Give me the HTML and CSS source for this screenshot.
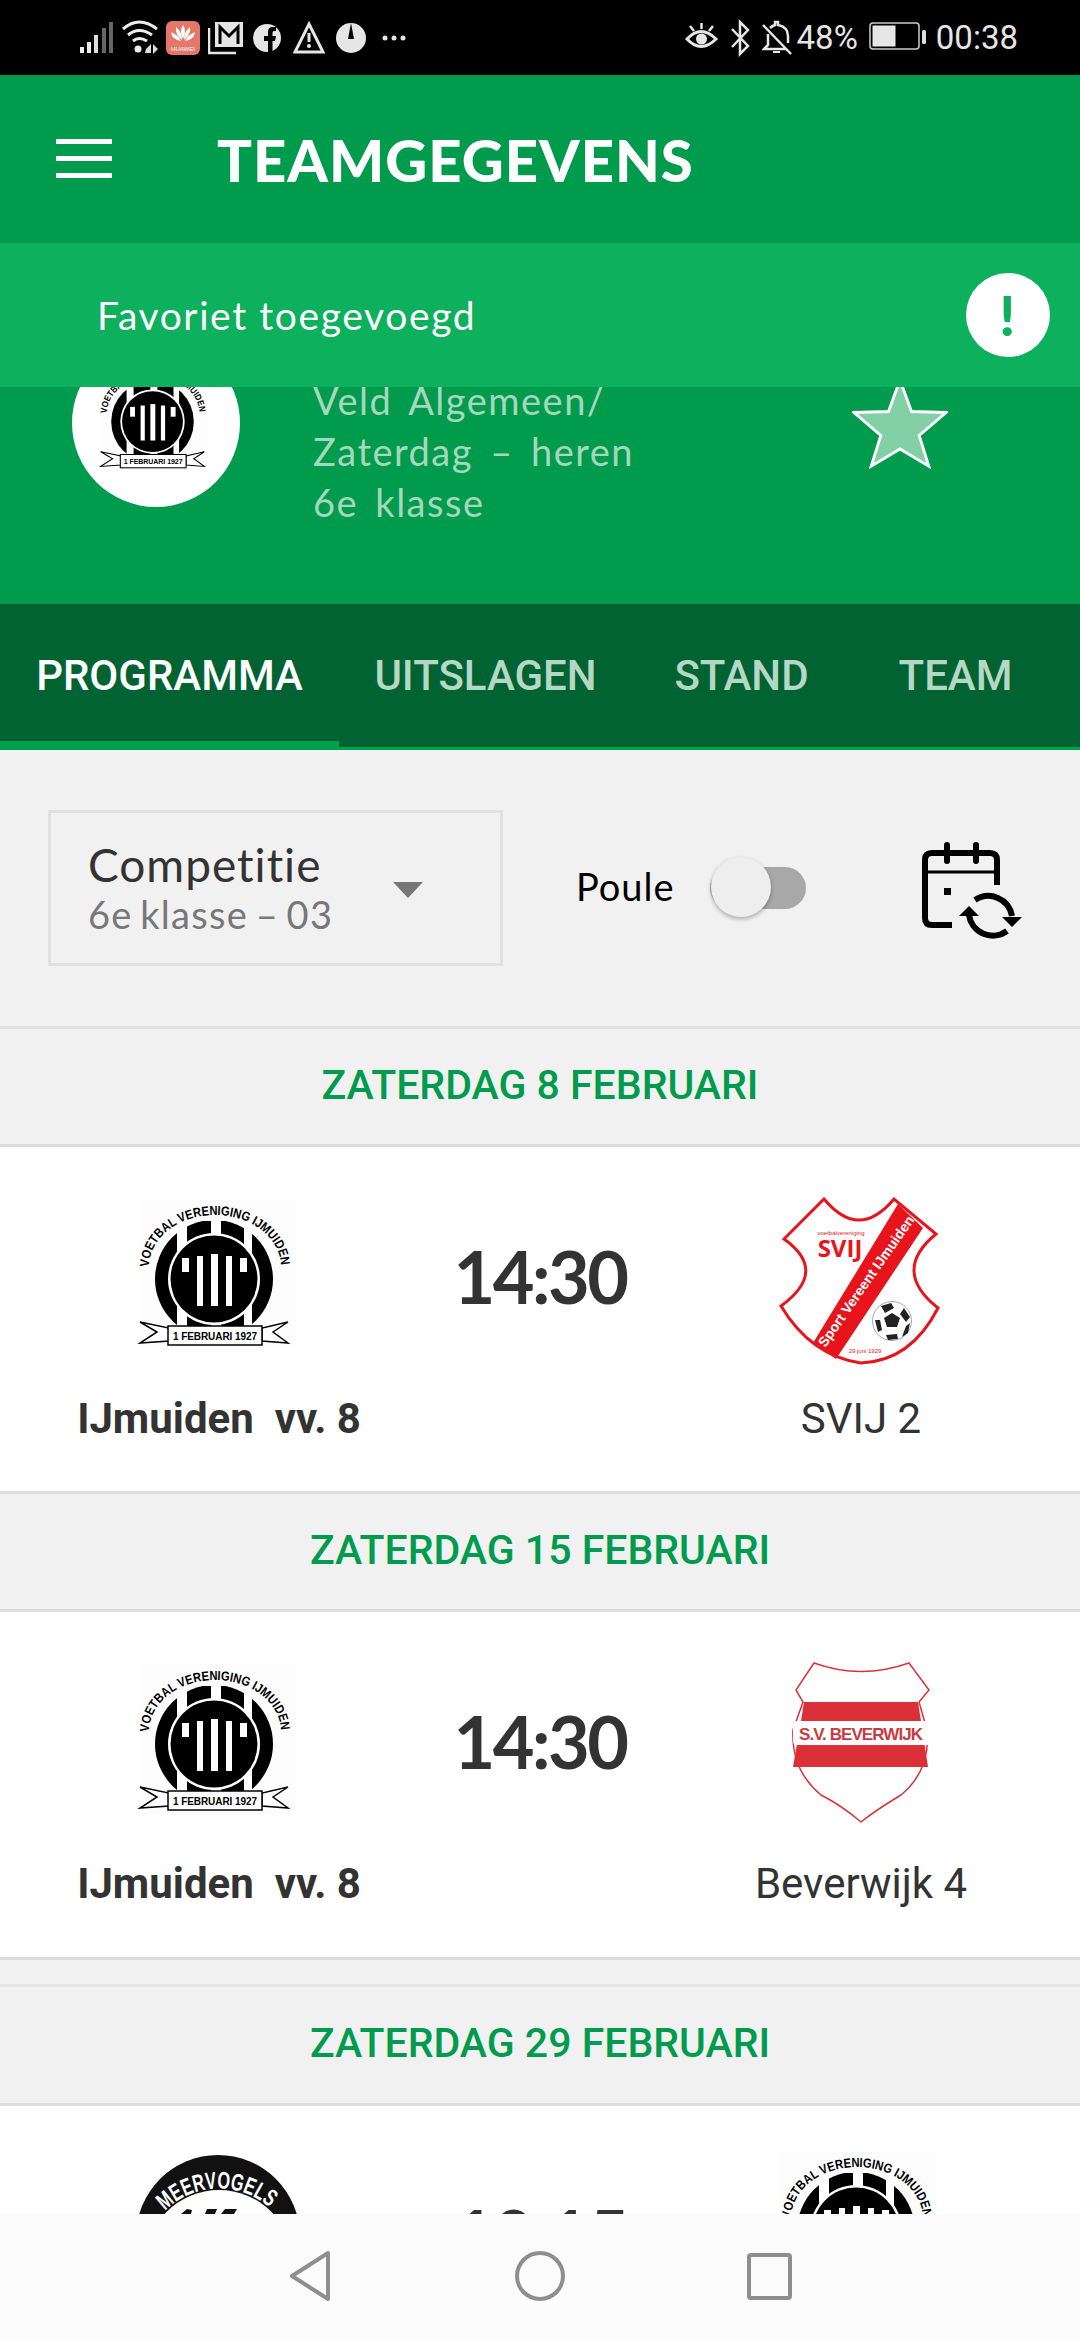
FILE: index.html
```html
<!DOCTYPE html>
<html lang="nl">
<head>
    <meta charset="UTF-8">
    <meta name="viewport" content="width=device-width, initial-scale=1.0">
    <title>Teamgegevens</title>
    <link rel="stylesheet" href="styles.css">
</head>
<body>
<svg class="defs" width="0" height="0">
    <defs>
        <symbol id="crest-ijmuiden" viewBox="0 0 240 200">
            <rect x="40" y="28" width="157" height="150" fill="#fdfdfd"/>
            <circle cx="115" cy="108" r="59" fill="#000"/>
            <rect x="78" y="45" width="10" height="112" fill="#fff"/>
            <rect x="112" y="45" width="10" height="112" fill="#fff"/>
            <rect x="145" y="45" width="8" height="112" fill="#fff"/>
            <rect x="50" y="40" width="130" height="10" fill="#fdfdfd"/>
            <circle cx="115" cy="108" r="46" fill="#fff"/>
            <circle cx="115" cy="108" r="43.5" fill="#000"/>
            <rect x="83" y="87" width="7" height="14" fill="#fff"/>
            <rect x="98" y="85" width="6" height="50" fill="#fff"/>
            <rect x="112" y="83" width="7" height="52" fill="#fff"/>
            <rect x="127" y="85" width="6" height="50" fill="#fff"/>
            <rect x="141" y="87" width="7" height="14" fill="#fff"/>
            <path id="arc-ij" d="M50 96 A66 52 0 0 1 182 96" fill="none"/>
            <text class="crest-arc"><textPath href="#arc-ij" textLength="184" lengthAdjust="spacingAndGlyphs">VOETBAL VERENIGING IJMUIDEN</textPath></text>
            <path d="M41 151 L70 157 V170 L41 172 L58 161 Z M189 151 L163 157 V170 L189 172 L174 161 Z" fill="#fff" stroke="#000" stroke-width="1.5"/>
            <rect x="69" y="155" width="94" height="19" fill="#fff" stroke="#000" stroke-width="1.5"/>
            <text class="crest-ribbon" x="116" y="169" text-anchor="middle" textLength="84">1 FEBRUARI 1927</text>
        </symbol>
        <symbol id="crest-svij" viewBox="0 0 220 200">
            <path d="M73 28 Q108 70 143 28 L185 63 Q140 100 187 137 Q160 190 110 192 Q60 185 30 135 Q78 100 33 68 Z" fill="#fff" stroke="#e8141c" stroke-width="3"/>
            <polygon points="147,33 172,57 85,188 62,172" fill="#e8141c"/>
            <text class="svij-band" transform="translate(119 113) rotate(-55)" text-anchor="middle">Sport Vereent IJmuiden</text>
            <text class="svij-small" x="90" y="64" text-anchor="middle">voetbalvereniging</text>
            <text class="svij-name" x="89" y="86" text-anchor="middle">SVIJ</text>
            <text class="svij-small" x="114" y="182" text-anchor="middle">29 juni 1929</text>
            <circle cx="141" cy="150" r="19.5" fill="#fff" stroke="#aaa" stroke-width="1"/>
            <polygon points="141,143 149,148 146,157 136,157 133,148" fill="#222" transform="translate(0 -1)"/>
            <path d="M130 135 L140 132 L143 137 L134 142 Z M153 137 L159 146 L155 151 L149 143 Z M124 149 L129 149 L131 159 L127 161 Z M135 164 L146 163 L147 168 L137 169 Z M155 155 L159 152 L157 162 L151 166 Z" fill="#222"/>
        </symbol>
        <symbol id="crest-beverwijk" viewBox="0 0 220 200">
            <path d="M63 27 Q110 44 158 27 L178 54 L168 66 L176 94 Q180 134 150 159 Q125 174 110 186 Q90 169 70 159 Q40 134 42 94 L52 66 L45 54 Z" fill="#fff" stroke="#d8333a" stroke-width="1.5"/>
            <polygon points="53,66 167,66 170,85 177,131 42,131 50,85" fill="#dc3038"/>
            <rect x="42" y="85" width="137" height="24" rx="4" fill="#fff"/>
            <text class="bev-name" x="110" y="104" text-anchor="middle" textLength="124">S.V. BEVERWIJK</text>
        </symbol>
        <symbol id="crest-meervogels" viewBox="0 0 240 200">
            <circle cx="119" cy="107" r="82" fill="#111"/>
            <circle cx="120" cy="134" r="74" fill="#fff"/>
            <path id="arc-mv" d="M66 81 A76 76 0 0 1 174 81" fill="none"/>
            <text class="mv-arc"><textPath href="#arc-mv" textLength="115" lengthAdjust="spacingAndGlyphs">MEERVOGELS</textPath></text>
            <path d="M82 84 l6 -5 l5 1 l-1 4 z M106 84 l2 -5 l10 0 l-2 5 z M122 84 l4 -5 l12 0 l-3 5 z" fill="#111"/>
        </symbol>
    </defs>
</svg>

<div class="phone">
    <div class="status-bar">
        <div class="status-left">
            <svg class="ic-signal" width="42" height="40" viewBox="0 0 42 40">
                <rect x="0" y="29" width="4" height="6" fill="#eee"/>
                <rect x="7" y="24" width="4" height="11" fill="#eee"/>
                <rect x="14" y="17" width="4" height="18" fill="#ddd"/>
                <rect x="22" y="10" width="4" height="25" fill="#666"/>
                <rect x="29" y="4" width="4" height="31" fill="#666"/>
            </svg>
            <svg width="44" height="40" viewBox="0 0 44 40" fill="none" stroke="#eee" stroke-width="3">
                <path d="M1 11 Q17 -3 35 11"/>
                <path d="M6 17 Q17 8 30 17"/>
                <path d="M11 23 Q17 18 25 23"/>
                <circle cx="16" cy="31" r="3.5" fill="#eee" stroke="none"/>
                <path d="M24 31 l5 -5 v9 h-6z M31 26 l5 5 l-5 5z" fill="#ddd" stroke="none"/>
            </svg>
            <svg width="42" height="40" viewBox="0 0 42 40">
                <rect x="0" y="3" width="34" height="34" rx="6" fill="#e5766a"/>
                <path d="M17 7 q4 6 0 14 q-4 -8 0 -14z M10 9 q6 5 6 13 q-7 -5 -6 -13z M24 9 q-6 5 -6 13 q7 -5 6 -13z M5 14 q7 3 10 9 q-9 -1 -10 -9z M29 14 q-7 3 -10 9 q9 -1 10 -9z" fill="#fff"/>
                <text class="huawei-text" x="17" y="33" text-anchor="middle">HUAWEI</text>
            </svg>
            <svg width="45" height="40" viewBox="0 0 45 40">
                <path d="M1 10 V35 H28" fill="none" stroke="#e6e6e6" stroke-width="2.5"/>
                <rect x="7" y="4" width="28" height="25" fill="#e6e6e6"/>
                <path d="M12 26 V9 L21 18 L30 9 V26" fill="none" stroke="#000" stroke-width="3"/>
            </svg>
            <svg width="40" height="40" viewBox="0 0 40 40">
                <circle cx="14" cy="20" r="14" fill="#e6e6e6"/>
                <path d="M15 34 V23 H11 V18 H15 V14 Q15 9 20 9 H23 V13 H21 Q19.500 13 19.500 15 V18 H23 L22 23 H19.500 V34Z" fill="#000"/>
            </svg>
            <svg width="43" height="40" viewBox="0 0 43 40">
                <path d="M16 6 L30 34 H2 Z" fill="none" stroke="#e6e6e6" stroke-width="3"/>
                <rect x="14.500" y="15" width="3" height="9" fill="#e6e6e6"/>
                <circle cx="16" cy="28" r="2" fill="#e6e6e6"/>
            </svg>
            <svg width="46" height="40" viewBox="0 0 46 40">
                <circle cx="15" cy="20" r="15" fill="#e6e6e6"/>
                <path d="M15 5 L18 21 H12 Z" fill="#000"/>
            </svg>
            <svg width="24" height="40" viewBox="0 0 24 40" fill="#e6e6e6">
                <circle cx="3" cy="20" r="2.500"/>
                <circle cx="12" cy="20" r="2.500"/>
                <circle cx="21" cy="20" r="2.500"/>
            </svg>
        </div>
        <div class="status-right">
            <svg width="45" height="40" viewBox="0 0 45 40" fill="none" stroke="#e6e6e6" stroke-width="3">
                <path d="M2 21 Q16 6 31 21 Q16 36 2 21Z"/>
                <circle cx="16.500" cy="21" r="5.500" fill="#e6e6e6" stroke="none"/>
                <path d="M16.500 5 V11 M5 8 L9 13 M28 8 L24 13" stroke-width="2.500"/>
            </svg>
            <svg width="32" height="40" viewBox="0 0 32 40" fill="none" stroke="#e6e6e6" stroke-width="2.500">
                <path d="M2 11 L18 28 L10 36 V4 L18 12 L2 29"/>
            </svg>
            <svg width="35" height="40" viewBox="0 0 35 40" fill="none" stroke="#e6e6e6" stroke-width="2.500">
                <path d="M6 16 V27 L2 31 H24 M26 25 V18 Q26 9 16 7 V4 H13 V7 Q10 8 8 10"/>
                <path d="M1 7 L29 36"/>
                <path d="M11 34 H18" stroke-width="2"/>
            </svg>
            <span class="status-pct">48%</span>
            <svg class="ic-battery" width="58" height="40" viewBox="0 0 58 40">
                <rect x="1" y="5" width="49" height="26" rx="3" fill="none" stroke="#ccc" stroke-width="1.500"/>
                <rect x="3.500" y="7.500" width="23" height="21" fill="#e6e6e6"/>
                <rect x="53" y="12" width="4" height="14" rx="1.500" fill="#ddd"/>
            </svg>
            <span class="status-time">00:38</span>
        </div>
    </div>

    <header class="team-header">
        <div class="app-bar">
            <div class="burger"><span></span><span></span><span></span></div>
            <h1>TEAMGEGEVENS</h1>
        </div>
        <div class="team-info">
            <div class="team-logo">
                <svg width="170" height="142"><use href="#crest-ijmuiden"/></svg>
            </div>
            <div class="team-text">Veld Algemeen/<br>Zaterdag – heren<br>6e klasse</div>
            <svg class="team-star" width="96" height="92" viewBox="-2 -2 100 96">
                <polygon points="48,0 60,33 96,34 68,58 78,90 48,72 18,90 28,58 0,34 36,33" fill="#84d0a6" stroke="#fff" stroke-width="3"/>
            </svg>
        </div>
        <div class="toast">
            <span>Favoriet toegevoegd</span>
            <div class="toast-alert">!</div>
        </div>
    </header>

    <nav class="tabs">
        <a class="tab active">PROGRAMMA</a>
        <a class="tab">UITSLAGEN</a>
        <a class="tab">STAND</a>
        <a class="tab">TEAM</a>
    </nav>

    <section class="filters">
        <div class="select-box">
            <div>
                <div class="select-title">Competitie</div>
                <div class="select-sub">6e klasse – 03</div>
            </div>
            <div class="select-arrow"></div>
        </div>
        <span class="poule-label">Poule</span>
        <div class="switch"><div class="switch-knob"></div></div>
        <svg class="cal-icon" width="108" height="104" viewBox="20 8 108 104" fill="none" stroke="#000" stroke-width="6">
            <path d="M96 55 V30 Q96 23 89 23 H31 Q24 23 24 30 V88 Q24 95 31 95 H51"/>
            <path d="M24 42 H96" stroke-width="3"/>
            <path d="M46 15 V31 M75 15 V31" stroke-linecap="round"/>
            <rect x="43" y="58" width="7" height="7" fill="#000" stroke="none"/>
            <path d="M74 70 A24 24 0 0 1 111 86"/>
            <path d="M68 85 A24 24 0 0 0 106 101"/>
            <polygon points="101,87 121,87 111,97" fill="#000" stroke="none"/>
            <polygon points="58,86 78,86 68,76" fill="#000" stroke="none"/>
        </svg>
    </section>

    <div class="date-bar">ZATERDAG 8 FEBRUARI</div>
    <article class="match">
        <div class="side">
            <svg width="240" height="200"><use href="#crest-ijmuiden"/></svg>
            <div class="team-name home">IJmuiden&nbsp; vv. 8</div>
        </div>
        <div class="match-time">14:30</div>
        <div class="side">
            <svg width="220" height="200"><use href="#crest-svij"/></svg>
            <div class="team-name">SVIJ 2</div>
        </div>
    </article>

    <div class="date-bar">ZATERDAG 15 FEBRUARI</div>
    <article class="match match-last">
        <div class="side">
            <svg width="240" height="200"><use href="#crest-ijmuiden"/></svg>
            <div class="team-name home">IJmuiden&nbsp; vv. 8</div>
        </div>
        <div class="match-time">14:30</div>
        <div class="side">
            <svg width="220" height="200"><use href="#crest-beverwijk"/></svg>
            <div class="team-name">Beverwijk 4</div>
        </div>
    </article>

    <div class="date-bar date-bar-top">ZATERDAG 29 FEBRUARI</div>
    <article class="match">
        <div class="side">
            <svg width="240" height="200"><use href="#crest-meervogels"/></svg>
        </div>
        <div class="match-time">10:15</div>
        <div class="side">
            <svg class="crest-up" width="240" height="200"><use href="#crest-ijmuiden"/></svg>
        </div>
    </article>

    <div class="nav-bar">
        <svg width="52" height="60" viewBox="0 0 52 60" fill="none" stroke="#8e8e8e" stroke-width="4" stroke-linejoin="round">
            <path d="M44 7 V53 L8 30 Z"/>
        </svg>
        <svg width="52" height="60" viewBox="0 0 52 60" fill="none" stroke="#8e8e8e" stroke-width="4">
            <circle cx="26" cy="30" r="23"/>
        </svg>
        <svg width="52" height="60" viewBox="0 0 52 60" fill="none" stroke="#8e8e8e" stroke-width="4" stroke-linejoin="round">
            <rect x="5" y="9" width="41" height="43" rx="2"/>
        </svg>
    </div>
</div>
</body>
</html>
```

FILE: styles.css
```css
* {
    box-sizing: border-box;
}
body {
    margin: 0;
    font-family: Lato, sans-serif;
    background-color: #f1f1f1;
}
.defs {
    position: absolute;
}
.phone {
    position: relative;
    width: 1080px;
    height: 2340px;
    overflow: hidden;
    background-color: #f1f1f1;
}

/* status bar */
.status-bar {
    height: 75px;
    background-color: #000;
    color: #e6e6e6;
    display: flex;
    justify-content: space-between;
    align-items: center;
    padding: 0 62px 0 80px;
    font-family: Roboto, sans-serif;
    font-size: 33px;
}
.status-left, .status-right {
    display: flex;
    align-items: center;
}
.ic-battery {
    margin-left: 11px;
    margin-right: 9px;
}
.huawei-text {
    font-family: "Liberation Sans", sans-serif;
    font-size: 6px;
    fill: #fff;
}

/* header */
.team-header {
    position: relative;
    height: 529px;
    background-color: #009b4c;
    color: #fff;
}
.app-bar {
    height: 168px;
    display: flex;
    align-items: flex-start;
    padding: 64px 0 0 56px;
}
.burger {
    width: 56px;
    display: flex;
    flex-direction: column;
    gap: 12px;
}
.burger span {
    display: block;
    height: 5px;
    background-color: #fff;
}
.app-bar h1 {
    margin: -12px 0 0 105px;
    font-size: 58px;
    font-weight: 900;
    line-height: 66px;
    letter-spacing: 1px;
}
.team-info {
    display: flex;
    align-items: flex-start;
    padding: 96px 0 0 72px;
}
.team-logo {
    width: 168px;
    height: 168px;
    border-radius: 50%;
    background-color: #fff;
    display: flex;
    align-items: center;
    justify-content: center;
    flex-shrink: 0;
}
.team-logo svg {
    margin-top: -15px;
}
.team-text {
    margin: 36px 0 0 73px;
    width: 466px;
    flex-shrink: 0;
    font-size: 38px;
    line-height: 51px;
    letter-spacing: 1.5px;
    word-spacing: 6px;
    color: #a5d7bc;
}
.team-star {
    margin: 39px 0 0 73px;
}
.toast {
    position: absolute;
    left: 0;
    right: 0;
    top: 168px;
    height: 144px;
    background-color: #0db05c;
    display: flex;
    align-items: center;
    justify-content: space-between;
    padding: 0 30px 0 97px;
    font-size: 39px;
    letter-spacing: 1.6px;
}
.toast-alert {
    width: 84px;
    height: 84px;
    border-radius: 50%;
    background-color: #fff;
    color: #0db05c;
    font-size: 56px;
    font-weight: 900;
    line-height: 84px;
    text-align: center;
}

/* tabs */
.tabs {
    height: 146px;
    background-color: #006331;
    border-bottom: 3px solid #00a04e;
    display: grid;
    grid-template-columns: 339px 293px 219px 209px;
    font-family: Roboto, sans-serif;
    font-size: 42px;
    font-weight: 500;
    color: #b5d8c4;
}
.tab {
    text-align: center;
    line-height: 144px;
}
.tab.active {
    color: #fff;
    height: 146px;
    border-bottom: 9px solid #00a04e;
}

/* filters */
.filters {
    height: 279px;
    border-bottom: 3px solid #e0e0e0;
    display: flex;
    align-items: flex-start;
    padding: 60px 0 0 48px;
}
.select-box {
    width: 455px;
    height: 156px;
    border: 3px solid #e0e0e0;
    display: flex;
    align-items: center;
    padding-left: 37px;
}
.select-title {
    font-size: 46px;
    line-height: 52px;
    letter-spacing: 1px;
    color: #333;
}
.select-sub {
    font-size: 38px;
    line-height: 46px;
    letter-spacing: 1.3px;
    word-spacing: -3.5px;
    color: #777;
}
.select-arrow {
    margin: 4px 0 0 60px;
    width: 0;
    height: 0;
    border-left: 15px solid transparent;
    border-right: 15px solid transparent;
    border-top: 16px solid #777;
}
.poule-label {
    margin: 51px 0 0 73px;
    font-size: 38px;
    line-height: 50px;
    letter-spacing: 1px;
    color: #000;
}
.switch {
    position: relative;
    margin: 57px 0 0 35px;
    width: 96px;
    height: 42px;
    border-radius: 21px;
    background-color: #a8a8a8;
}
.switch-knob {
    position: absolute;
    left: 1px;
    top: -10px;
    width: 60px;
    height: 60px;
    border-radius: 50%;
    background-color: #eee;
    box-shadow: 0 2px 4px rgba(0,0,0,0.3);
}
.cal-icon {
    margin: 28px 0 0 115px;
}

/* matches */
.date-bar {
    height: 118px;
    border-bottom: 3px solid #ddd;
    font-family: Roboto, sans-serif;
    font-size: 41px;
    font-weight: 500;
    color: #009b4c;
    text-align: center;
    line-height: 113px;
}
.date-bar-top {
    height: 122px;
    margin-top: 24px;
    border-top: 3px solid #e4e4e4;
}
.match {
    height: 347px;
    background-color: #fff;
    display: grid;
    grid-template-columns: 438px 1fr 438px;
    padding-top: 24px;
    border-bottom: 3px solid #ddd;
}
.match-last {
    height: 348px;
}
.side {
    display: flex;
    flex-direction: column;
    align-items: center;
}
.crest-up {
    margin-top: -7px;
}
.team-name {
    margin-top: 24px;
    font-family: Roboto, sans-serif;
    font-size: 42px;
    line-height: 48px;
    color: #333;
}
.team-name.home {
    font-weight: 700;
}
.match-time {
    text-align: center;
    font-size: 72px;
    font-weight: 700;
    letter-spacing: -2.5px;
    line-height: 90px;
    padding-top: 60px;
    color: #333;
}

/* text inside the crests */
.crest-arc {
    font-family: "Liberation Sans", sans-serif;
    font-size: 13px;
    font-weight: 700;
}
.crest-ribbon {
    font-family: "Liberation Sans", sans-serif;
    font-size: 10px;
    font-weight: 700;
}
.svij-band {
    font-family: "Liberation Sans", sans-serif;
    font-size: 14px;
    font-weight: 700;
    fill: #fff;
}
.svij-small {
    font-family: "Liberation Sans", sans-serif;
    font-size: 6px;
    fill: #e8141c;
}
.svij-name {
    font-family: "Open Sans", sans-serif;
    font-size: 24px;
    font-weight: 700;
    fill: #e8141c;
}
.bev-name {
    font-family: "Liberation Sans", sans-serif;
    font-size: 17px;
    font-weight: 700;
    fill: #c93a40;
}
.mv-arc {
    font-family: "Liberation Sans", sans-serif;
    font-size: 24px;
    font-weight: 700;
    fill: #fff;
}

/* android nav bar */
.nav-bar {
    position: absolute;
    left: 0;
    right: 0;
    bottom: 0;
    height: 126px;
    background-color: #fbfbfb;
    display: flex;
    justify-content: center;
    align-items: flex-start;
    gap: 178px;
    padding: 32px 0 0 0;
}
```
